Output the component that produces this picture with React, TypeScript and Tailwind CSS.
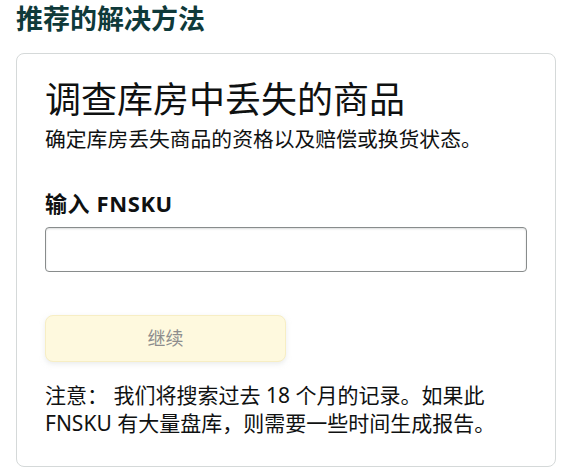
const font = { fontFamily: '"Noto Sans", "Noto Sans CJK SC", sans-serif' };

export default function App() {
  return (
    <div className="bg-white min-h-screen px-[16px] text-[#0f1111]" style={font}>
      <h1 className="pt-[2px] text-[27px] leading-[34px] font-bold text-[#0f3a3a]">
        推荐的解决方法
      </h1>

      <div className="mt-[17px] w-[540px] rounded-lg border border-[#d5d9d9] px-[28px] pt-[24px] pb-[29px]">
        <h2 className="text-[36px] leading-[44px] font-normal text-[#0f1111]">
          调查库房中丢失的商品
        </h2>
        <p className="mt-[3px] text-[20.8px] leading-[28px] text-[#0f1111]">
          确定库房丢失商品的资格以及赔偿或换货状态。
        </p>

        <label className="mt-[36px] block text-[22px] leading-[28px] font-bold tracking-[0.6px] text-[#0f1111]">
          输入 FNSKU
        </label>
        <input
          type="text"
          className="mt-[10px] block h-[45px] w-full rounded-[4px] border border-[#888c8c] bg-white px-3 shadow-[inset_0_1px_2px_rgba(15,17,17,0.15)] outline-none"
        />

        <button
          type="button"
          className="mt-[43px] flex h-[47px] w-[241px] items-center justify-center rounded-[8px] border border-[#f7eec4] bg-[#fef9de] text-[18px] text-[#8d8d8d] shadow-[0_2px_5px_rgba(213,217,217,0.5)]"
        >
          继续
        </button>

        <p className="mt-[19px] text-[21px] leading-[28px] text-[#0f1111]">
          注意： 我们将搜索过去 18 个月的记录。如果此 FNSKU 有大量盘库，则需要一些时间生成报告。
        </p>
      </div>
    </div>
  );
}
